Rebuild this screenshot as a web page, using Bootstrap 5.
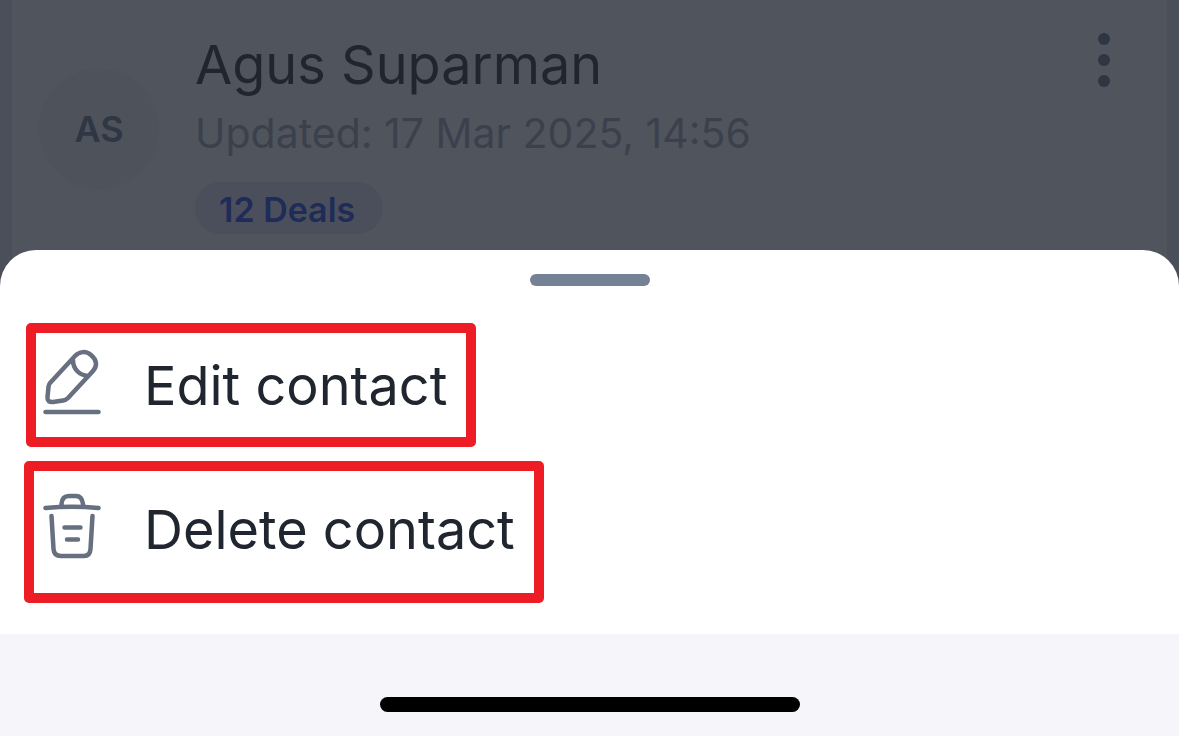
<!DOCTYPE html>
<html lang="en">
<head>
<meta charset="utf-8">
<meta name="viewport" content="width=device-width, initial-scale=1">
<title>Contact actions</title>
<link href="https://cdn.jsdelivr.net/npm/bootstrap@5.3.0/dist/css/bootstrap.min.css" rel="stylesheet">
<style>
  body { font-family: Inter, "Liberation Sans", sans-serif; background: #f5f5fa; color: #20262f; }
  .dimmed { background: #4b4f59; padding: 0 12px; }
  .contact-card { background: #50545d; padding: 31px 57px 52px 27px; gap: 36px; }
  .avatar { width: 120px; height: 120px; margin-top: 38px; background: #4d525b; color: #2f3744; font-size: 36px; font-weight: 600; }
  .contact-name { font-size: 54px; line-height: 68px; font-weight: 400; color: #20262f; }
  .updated { font-size: 41px; line-height: 68px; color: #3b414c; }
  .deals { font-size: 34px; line-height: 48px; font-weight: 600; color: #1f2b58; background: #4b4f5b; padding: 4px 28px 0 24px; margin-top: 15px; }
  .kebab { color: #2f3643; margin-top: 2px; }
  .sheet { border-radius: 36px 36px 0 0; margin-top: -36px; padding: 24px 24px 31px; }
  .handle { width: 120px; height: 12px; background: #758195; margin-bottom: 37px; }
  .action { border: 10px solid #ee1c25; border-radius: 5px; font-size: 54px; line-height: 66px; color: #20262f; gap: 42px; }
  .action svg { color: #667080; }
  .edit { margin: 0 0 14px 2px; padding: 16px 19px 14px 6px; }
  .delete { padding: 22px 19px 26px 8px; }
  .home-area { padding: 63px 0 24px; }
  .home-bar { width: 420px; height: 15px; background: #000; }
</style>
</head>
<body class="min-vh-100 d-flex flex-column">
<main>
  <section class="dimmed">
    <div class="contact-card d-flex align-items-start">
      <div class="avatar rounded-circle d-flex align-items-center justify-content-center flex-shrink-0">AS</div>
      <div class="flex-grow-1 d-flex flex-column align-items-start">
        <h1 class="contact-name m-0">Agus Suparman</h1>
        <p class="updated m-0">Updated: 17 Mar 2025, 14:56</p>
        <span class="deals rounded-pill">12 Deals</span>
      </div>
      <button type="button" class="kebab btn border-0 p-0 lh-1" aria-label="More actions">
        <svg class="d-block" width="12" height="54" viewBox="0 0 12 54" fill="currentColor"><circle cx="6" cy="6" r="6"/><circle cx="6" cy="27" r="6"/><circle cx="6" cy="48" r="6"/></svg>
      </button>
    </div>
  </section>
  <section class="sheet bg-white position-relative d-flex flex-column align-items-start">
    <div class="handle rounded-pill align-self-center"></div>
    <button type="button" class="action edit bg-white d-flex align-items-center">
      <svg width="60" height="74" viewBox="0 0 60 74" fill="none" stroke="currentColor" stroke-width="4.500" stroke-linecap="round" stroke-linejoin="round">
        <path d="M8 34L33 7C37 2.500 44 1.500 49 6C55 11 55.500 17 51 22L26 49Q24 51 21 51.500L11 53Q5 53.500 5.500 48L6.500 38Q6.500 36 8 34ZM31 11C31 20 37 26 46 27M3.500 63H56.500"/>
      </svg>
      <span>Edit contact</span>
    </button>
    <button type="button" class="action delete bg-white d-flex align-items-center">
      <svg width="60" height="74" viewBox="0 0 60 74" fill="none" stroke="currentColor" stroke-width="4.500" stroke-linecap="round" stroke-linejoin="round">
        <path d="M3.500 15Q30 12.500 56.500 15M19.500 13V11Q20 3 27 3H34Q40 3 41 11V13M9.500 23L11.500 56Q12 63 19 63H42Q48 63 48.500 56L50.500 23M22.500 34.500H38.500M25 46.500H36"/>
      </svg>
      <span>Delete contact</span>
    </button>
  </section>
</main>
<footer class="home-area d-flex justify-content-center"><div class="home-bar rounded-pill"></div></footer>
<script src="https://cdn.jsdelivr.net/npm/bootstrap@5.3.0/dist/js/bootstrap.bundle.min.js"></script>
</body>
</html>
